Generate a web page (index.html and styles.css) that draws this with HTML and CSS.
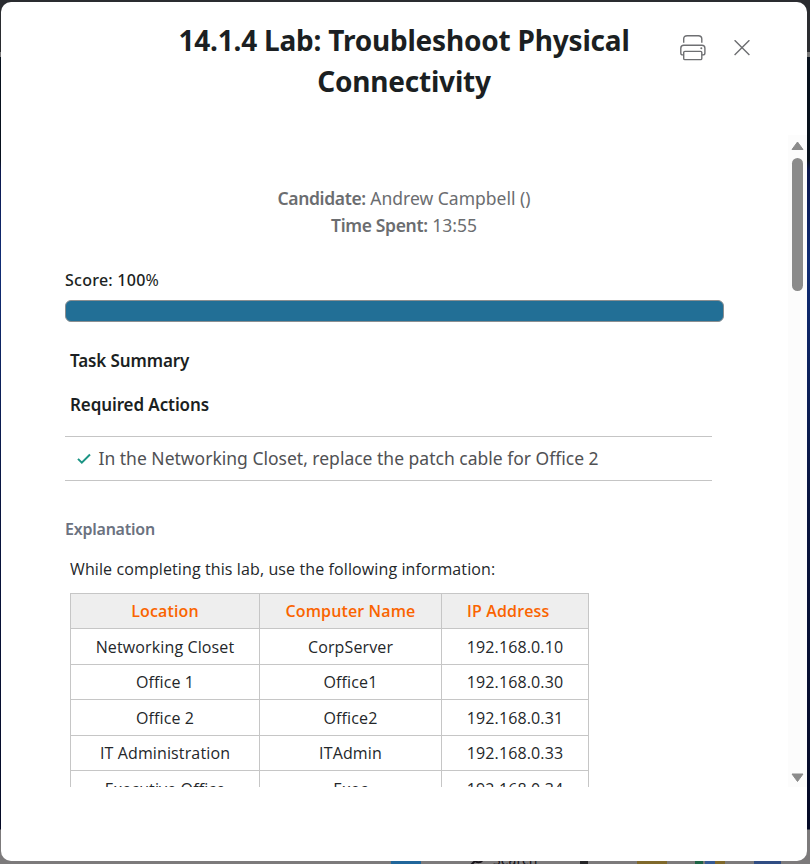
FILE: index.html
```html
<!DOCTYPE html>
<html lang="en">
<head>
<meta charset="utf-8">
<title>Lab Report</title>
<link rel="stylesheet" href="styles.css">
</head>
<body>
<div class="taskbar">
  <i class="tile start"></i><span class="search"><svg width="16" height="12" viewBox="0 0 16 12"><path d="M2 11 6 7M5 1a5 5 0 1 0 9 0" fill="none" stroke="#17131a" stroke-width="2"/></svg>Search</span><i class="tile task"></i><i class="tile folder"></i><i class="tile store"></i><i class="tile app"></i>
</div>
<div class="modal">
  <header class="head">
    <h1>14.1.4 Lab: Troubleshoot Physical Connectivity</h1>
    <svg class="print" width="26" height="26" viewBox="0 0 26 26"><g fill="none" stroke="#6e6f72" stroke-width="1.4"><path d="M3.7 7.8V4Q3.7.7 7.2.7h11.1q3.5 0 3.5 3.3v3.8M3.7 19.9H2.8Q.8 19.9.8 17.9V13.2Q.8 10.2 3.8 10.2h18.1q3 0 3 3v4.7q0 2-2 2h-1.1"/><rect x="3.7" y="16.4" width="18.1" height="8.2" rx="1.2"/></g><circle cx="21.3" cy="13.3" r="1" fill="#6e6f72"/></svg>
    <svg class="close" width="16" height="16" viewBox="0 0 16 16"><path d="m.6.2 14.8 14.8M15.4.2.6 15" fill="none" stroke="#6e6f72" stroke-width="1.4"/></svg>
  </header>
  <main class="body">
    <div class="content">
      <div class="who">
        <p><b>Candidate:</b> Andrew Campbell ()</p>
        <p><b>Time Spent:</b> 13:55</p>
      </div>
      <div class="score">Score: 100<span class="pct">%</span></div>
      <div class="bar"></div>
      <h2 class="summary">Task Summary</h2>
      <h2 class="required">Required Actions</h2>
      <div class="action">
        <svg width="14" height="11" viewBox="0 0 14 11"><path d="m1 5.9 3.8 3.7L13 1.5" fill="none" stroke="#1b9484" stroke-width="2"/></svg>
        <span>In the Networking Closet, replace the patch cable for Office 2</span>
      </div>
      <h2 class="explain">Explanation</h2>
      <p class="intro">While completing this lab, use the following information:</p>
      <table>
        <colgroup><col class="c1"><col class="c2"><col class="c3"></colgroup>
        <tr><th>Location</th><th>Computer Name</th><th class="ip">IP Address</th></tr>
        <tr><td>Networking Closet</td><td>CorpServer</td><td>192.168.0.10</td></tr>
        <tr><td>Office 1</td><td>Office1</td><td>192.168.0.30</td></tr>
        <tr><td>Office 2</td><td>Office2</td><td>192.168.0.31</td></tr>
        <tr><td>IT Administration</td><td>ITAdmin</td><td>192.168.0.33</td></tr>
        <tr><td>Executive Office</td><td>Exec</td><td>192.168.0.34</td></tr>
      </table>
    </div>
    <div class="scroll">
      <svg width="13" height="10" viewBox="0 0 13 10"><path d="M6.5 1 12 8.5H1z" fill="#8b8b8b" stroke="#8b8b8b" stroke-linejoin="round"/></svg>
      <i class="thumb"></i>
      <svg class="down" width="13" height="10" viewBox="0 0 13 10"><path d="M6.5 8.5 12 1H1z" fill="#8b8b8b" stroke="#8b8b8b" stroke-linejoin="round"/></svg>
    </div>
  </main>
</div>
</body>
</html>
```
FILE: styles.css
```css
* { box-sizing: border-box; margin: 0; }
body {
  position: relative;
  width: 810px;
  height: 864px;
  padding: 2px 3px 3px 1px;
  overflow: hidden;
  font-family: "Noto Sans", sans-serif;
  background: linear-gradient(#2a2c30 0 52px, #777 52px 57px, #08111d 57px 160px, #0b174d 170px, #102d76 260px, #091540 500px, #050a26 829px, #7c7a7b 830px);
}
.taskbar { position: absolute; left: 0; top: 861px; width: 810px; height: 3px; overflow: hidden; background: #7c7a7b; }
.tile { position: absolute; top: 0; height: 3px; }
.start { left: 391px; width: 30px; background: #20669b; }
.task { left: 580px; width: 8px; background: #242427; }
.folder { left: 637px; width: 30px; background: #80692b; }
.store { left: 695px; width: 30px; background: linear-gradient(90deg, #1d6545 0 8px, #777 8px 10px, #365a94 10px 20px, #80692b 20px); }
.app { left: 754px; width: 27px; background: #304d83; }
.search { position: absolute; left: 469px; top: -9px; display: flex; gap: 8px; align-items: center; font-size: 14px; line-height: 16px; color: #17131a; }
.modal {
  position: relative;
  height: 859px;
  background: #fff;
  border-radius: 10px;
  overflow: hidden;
}
.head { display: flex; height: 133px; padding: 18px 57px 0 164px; }
h1 { width: 478px; margin-right: 1px; font-size: 28px; line-height: 41px; letter-spacing: -.2px; text-align: center; color: #1b1f22; }
.print { flex: none; margin: 15px 0 0 36px; }
.close { flex: none; margin: 20px 0 0 28px; }
.body { display: flex; height: 652px; overflow: hidden; }
.content { width: 787px; padding: 50px 0 0 64px; }
.who { width: 678px; text-align: center; font-size: 17.5px; line-height: 27px; color: #6b6d70; }
.who b { font-weight: 600; letter-spacing: -.35px; }
.score { margin-top: 29px; font-size: 16px; font-weight: 500; line-height: 24px; letter-spacing: .25px; color: #1b1f22; }
.pct { font-weight: 400; }
.bar { width: 659px; height: 22px; margin-top: 8px; border: 1px solid #8b8f91; border-radius: 6px; background: #226f96; }
h2 { font-size: 17px; font-weight: 600; line-height: 24px; letter-spacing: -.1px; color: #1b1f22; }
.summary { margin: 27px 0 0 5px; }
.required { margin: 20px 0 0 5px; }
.action { display: flex; align-items: center; gap: 7.5px; width: 647px; height: 45px; margin-top: 19px; padding-left: 12px; border: solid #c5c5c5; border-width: 1px 0; font-size: 17.5px; color: #505154; }
.action span { padding-bottom: 2px; }
h2.explain { margin-top: 36px; font-size: 16px; letter-spacing: -.23px; color: #6b7280; }
.intro { margin: 16px 0 0 5px; font: 16px/24px "Open Sans", sans-serif; letter-spacing: .11px; color: #24272a; }
table { width: 519px; margin: 12px 0 0 5px; table-layout: fixed; border-collapse: collapse; font: 16px/24px "Open Sans", sans-serif; letter-spacing: .13px; color: #24272a; }
.c1 { width: 189px; }
.c2 { width: 182px; }
.c3 { width: 147px; }
th, td { height: 35px; padding: 0; border: 1px solid #c6c6c6; text-align: center; white-space: nowrap; }
tr:nth-child(even) td { height: 36px; }
th { font-weight: 600; color: #fa6400; background: #eee; }
th.ip { padding-left: 25px; text-align: left; }
.scroll { display: flex; flex-direction: column; align-items: center; width: 19px; padding: 6px 0 4px; background: #fcfcfc; }
.thumb { width: 11px; height: 133px; margin-top: 7px; border-radius: 6px; background: #8b8b8b; }
.down { margin-top: auto; }
```
